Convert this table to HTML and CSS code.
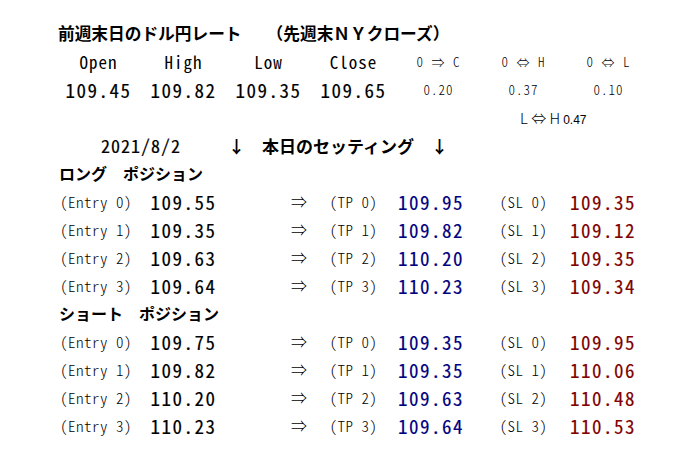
FILE: index.html
```html
<!DOCTYPE html>
<html lang="ja">
<head>
<meta charset="utf-8">
<title>前週末日のドル円レート</title>
<link rel="stylesheet" href="styles.css">
</head>
<body>
<div class="sheet">
  <div class="title span7">前週末日のドル円レート　　（先週末ＮＹクローズ）</div>

  <div class="hd">Open</div>
  <div class="hd">High</div>
  <div class="hd">Low</div>
  <div class="hd">Close</div>
  <div class="sm">0 ⇒ C</div>
  <div class="sm">0 ⇔ H</div>
  <div class="sm">0 ⇔ L</div>

  <div class="num c">109.45</div>
  <div class="num c">109.82</div>
  <div class="num c">109.35</div>
  <div class="num c">109.65</div>
  <div class="sm">0.20</div>
  <div class="sm">0.37</div>
  <div class="sm">0.10</div>

  <div class="lh"><span class="lh-k">L ⇔ H</span><span class="lh-v">0.47</span></div>

  <div class="date">2021/8/2</div>
  <div class="setting">↓　本日のセッティング　↓</div>

  <div class="sec span7">ロング　ポジション</div>

  <div class="lbl">(Entry 0)</div><div class="num c">109.55</div><div class="arr">⇒</div><div class="lbl c">(TP 0)</div><div class="num tp">109.95</div><div class="lbl c">(SL 0)</div><div class="num sl">109.35</div>
  <div class="lbl">(Entry 1)</div><div class="num c">109.35</div><div class="arr">⇒</div><div class="lbl c">(TP 1)</div><div class="num tp">109.82</div><div class="lbl c">(SL 1)</div><div class="num sl">109.12</div>
  <div class="lbl">(Entry 2)</div><div class="num c">109.63</div><div class="arr">⇒</div><div class="lbl c">(TP 2)</div><div class="num tp">110.20</div><div class="lbl c">(SL 2)</div><div class="num sl">109.35</div>
  <div class="lbl">(Entry 3)</div><div class="num c">109.64</div><div class="arr">⇒</div><div class="lbl c">(TP 3)</div><div class="num tp">110.23</div><div class="lbl c">(SL 3)</div><div class="num sl">109.34</div>

  <div class="sec span7">ショート　ポジション</div>

  <div class="lbl">(Entry 0)</div><div class="num c">109.75</div><div class="arr">⇒</div><div class="lbl c">(TP 0)</div><div class="num tp">109.35</div><div class="lbl c">(SL 0)</div><div class="num sl">109.95</div>
  <div class="lbl">(Entry 1)</div><div class="num c">109.82</div><div class="arr">⇒</div><div class="lbl c">(TP 1)</div><div class="num tp">109.35</div><div class="lbl c">(SL 1)</div><div class="num sl">110.06</div>
  <div class="lbl">(Entry 2)</div><div class="num c">110.20</div><div class="arr">⇒</div><div class="lbl c">(TP 2)</div><div class="num tp">109.63</div><div class="lbl c">(SL 2)</div><div class="num sl">110.48</div>
  <div class="lbl">(Entry 3)</div><div class="num c">110.23</div><div class="arr">⇒</div><div class="lbl c">(TP 3)</div><div class="num tp">109.64</div><div class="lbl c">(SL 3)</div><div class="num sl">110.53</div>
</div>
</body>
</html>
```

FILE: styles.css
```css
html, body {
  margin: 0;
  padding: 0;
  background: #ffffff;
}

body {
  width: 700px;
  height: 450px;
  overflow: hidden;
  font-family: "Noto Sans CJK JP", sans-serif;
  color: #000000;
}

.sheet {
  display: grid;
  grid-template-columns: repeat(7, 85px);
  grid-auto-rows: 28px;
  align-items: center;
  padding: 19px 0 0 56px;
}

.span7 {
  grid-column: 1 / span 7;
}

.title {
  font-size: 16.7px;
  font-weight: 700;
  padding-left: 2px;
  white-space: pre;
  line-height: 1;
}

.sec {
  font-size: 16px;
  font-weight: 700;
  padding-left: 3px;
  white-space: pre;
  line-height: 1;
}

.hd {
  text-align: center;
  font-size: 17px;
  font-weight: 400;
  letter-spacing: 1px;
  font-feature-settings: "hwid" 1;
  line-height: 1;
}

.sm {
  text-align: center;
  font-size: 13px;
  font-weight: 300;
  letter-spacing: 1px;
  white-space: pre;
  font-feature-settings: "hwid" 1;
  line-height: 1;
}

.num {
  font-size: 19px;
  font-weight: 400;
  letter-spacing: 1.5px;
  font-feature-settings: "hwid" 1;
  -webkit-text-stroke: 0.15px currentColor;
  line-height: 1;
}

.c {
  text-align: center;
}

.tp {
  color: #000080;
  padding-left: 2px;
}

.sl {
  color: #800000;
  padding-left: 4px;
}

.lbl {
  font-size: 15px;
  font-weight: 300;
  letter-spacing: 0.5px;
  white-space: pre;
  font-feature-settings: "hwid" 1;
  padding-left: 4px;
  line-height: 1;
}

.lbl.c {
  padding-left: 0;
}

.arr {
  text-align: right;
  font-size: 16px;
  font-weight: 300;
  padding-right: 4px;
  line-height: 1;
}

.lh {
  grid-column: 6 / span 2;
  padding-left: 39px;
  line-height: 1;
  white-space: pre;
}

.lh-k {
  font-size: 15px;
  font-weight: 300;
}

.lh-v {
  font-family: "Liberation Sans", sans-serif;
  font-size: 12px;
  margin-left: 3px;
}

.date {
  grid-column: 1 / span 2;
  text-align: center;
  font-size: 18px;
  font-weight: 400;
  letter-spacing: 1px;
  font-feature-settings: "hwid" 1;
  -webkit-text-stroke: 0.2px currentColor;
  line-height: 1;
}

.setting {
  grid-column: 3 / span 5;
  padding-left: 2px;
  font-size: 17px;
  font-weight: 700;
  white-space: pre;
  line-height: 1;
}
```
